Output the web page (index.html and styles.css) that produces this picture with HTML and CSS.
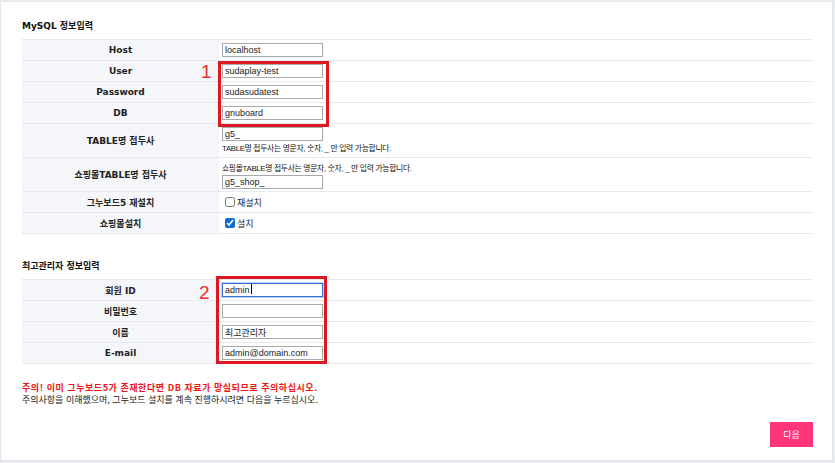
FILE: index.html
```html
<!DOCTYPE html>
<html lang="ko">
<head>
  <meta charset="UTF-8" />
  <title>그누보드5 설치</title>
  <link rel="stylesheet" href="styles.css">
</head>
<body>
  <div class="panel">
    <h2 class="sec-title">MySQL 정보입력</h2>
    <div class="table-wrap">
      <table class="frm">
        <tr>
          <th>Host</th>
          <td><input type="text" class="ipt" value="localhost" /></td>
        </tr>
        <tr>
          <th>User</th>
          <td><input type="text" class="ipt" value="sudaplay-test" /></td>
        </tr>
        <tr>
          <th>Password</th>
          <td><input type="text" class="ipt" value="sudasudatest" /></td>
        </tr>
        <tr>
          <th>DB</th>
          <td><input type="text" class="ipt" value="gnuboard" /></td>
        </tr>
        <tr class="tall">
          <th>TABLE명 접두사</th>
          <td>
            <div class="fld">
              <span class="ipt">g5_</span>
              <span class="help">TABLE명 접두사는 영문자, 숫자, _ 만 입력 가능합니다.</span>
            </div>
          </td>
        </tr>
        <tr class="tall">
          <th>쇼핑몰TABLE명 접두사</th>
          <td>
            <div class="fld">
              <span class="help">쇼핑몰TABLE명 접두사는 영문자, 숫자, _ 만 입력 가능합니다.</span>
              <input type="text" class="ipt" value="g5_shop_" />
            </div>
          </td>
        </tr>
        <tr>
          <th>그누보드5 재설치</th>
          <td><label class="chk"><input type="checkbox" />재설치</label></td>
        </tr>
        <tr>
          <th>쇼핑몰설치</th>
          <td><label class="chk"><input type="checkbox" checked />설치</label></td>
        </tr>
      </table>
      <span class="mark mark-1">1</span>
      <div class="hl hl-1"></div>
    </div>

    <h2 class="sec-title sec-admin">최고관리자 정보입력</h2>
    <div class="table-wrap">
      <table class="frm">
        <tr>
          <th>회원 ID</th>
          <td><span class="ipt ipt-focus">admin<i class="caret"></i></span></td>
        </tr>
        <tr>
          <th>비밀번호</th>
          <td><input type="password" class="ipt" value="" /></td>
        </tr>
        <tr>
          <th>이름</th>
          <td><input type="text" class="ipt" value="최고관리자" /></td>
        </tr>
        <tr>
          <th>E-mail</th>
          <td><input type="text" class="ipt" value="admin@domain.com" /></td>
        </tr>
      </table>
      <span class="mark mark-2">2</span>
      <div class="hl hl-2"></div>
    </div>

    <p class="warn">
      <strong>주의! 이미 그누보드5가 존재한다면 DB 자료가 망실되므로 주의하십시오.</strong><br>
      주의사항을 이해했으며, 그누보드 설치를 계속 진행하시려면 다음을 누르십시오.
    </p>

    <div class="btn-row">
      <button type="button" class="btn-next">다음</button>
    </div>
  </div>
</body>
</html>
```

FILE: styles.css
```css
body {
  margin: 0;
  background-color: #eaeef3;
  font-family: "DejaVu Sans", "Noto Sans CJK KR", sans-serif;
  color: #222;
}
.panel {
  box-sizing: border-box;
  width: 833px;
  height: 460px;
  margin: 1px 0 0 0;
  padding: 18px 19px 3px 21px;
  background-color: #fff;
  border: 1px solid #e2e6eb;
}
.sec-title {
  margin: 0 0 6px;
  font-size: 9px;
  line-height: 13px;
  font-weight: bold;
  color: #111;
}
.sec-admin {
  margin-top: 26px;
}
.table-wrap {
  position: relative;
}
.frm {
  width: 100%;
  border-collapse: collapse;
  border-top: 1px solid #e6e9ed;
}
.frm th,
.frm td {
  height: 21px;
  padding: 0 3px;
  border-bottom: 1px solid #e6e9ed;
  box-sizing: border-box;
  vertical-align: middle;
}
.frm th {
  width: 197px;
  background-color: #f4f6f9;
  font-size: 9px;
  font-weight: bold;
  color: #222;
  text-align: center;
}
.frm tr.tall th,
.frm tr.tall td {
  height: 34px;
}
.fld {
  display: flex;
  flex-direction: column;
  align-items: flex-start;
}
.ipt {
  display: block;
  flex: none;
  width: 101px;
  height: 14px;
  margin: 0;
  padding: 0 2px;
  box-sizing: border-box;
  border: 1px solid #a9a9a9;
  font-family: "Liberation Sans", "Noto Sans CJK KR", sans-serif;
  font-size: 9px;
  line-height: 12px;
  color: #222;
  background-color: #fff;
}
.ipt-focus {
  border-color: #2f6fd6;
  box-shadow: 0 0 0 1px #bcd3f5;
}
.caret {
  display: inline-block;
  width: 1px;
  height: 10px;
  margin-left: 1px;
  vertical-align: -1px;
  background-color: #000;
}
.help {
  display: block;
  margin: 2px 0 1px;
  font-family: "Liberation Sans", "Noto Sans CJK KR", sans-serif;
  font-size: 7.8px;
  line-height: 11px;
  letter-spacing: -0.3px;
  white-space: nowrap;
  color: #111;
}
.chk {
  display: flex;
  align-items: center;
  gap: 1px;
  font-family: "Noto Sans CJK KR", sans-serif;
  font-size: 9px;
  color: #222;
}
.chk input {
  width: 10px;
  height: 10px;
  margin: 0 1px 0 3px;
  accent-color: #0b6bdc;
}
.mark {
  position: absolute;
  font-family: "Liberation Sans", sans-serif;
  font-size: 19px;
  line-height: 19px;
  color: #e5322d;
}
.mark-1 {
  left: 179px;
  top: 23px;
}
.mark-2 {
  left: 177px;
  top: 4px;
}
.hl {
  position: absolute;
  border: 3px solid #dd1820;
  box-sizing: border-box;
}
.hl-1 {
  left: 196px;
  top: 22px;
  width: 111px;
  height: 66px;
}
.hl-2 {
  left: 194px;
  top: -3px;
  width: 111px;
  height: 88px;
}
.warn {
  margin: 18px 0 0;
  font-family: "Noto Sans CJK KR", sans-serif;
  font-size: 9px;
  line-height: 12px;
  color: #222;
}
.warn strong {
  letter-spacing: 0.55px;
  color: #f01414;
}
.btn-row {
  display: flex;
  justify-content: flex-end;
  margin-top: 16px;
}
.btn-next {
  width: 43px;
  height: 25px;
  border: none;
  background-color: #ff3479;
  color: #fff;
  font-family: "Noto Sans CJK KR", sans-serif;
  font-size: 9px;
}
```
